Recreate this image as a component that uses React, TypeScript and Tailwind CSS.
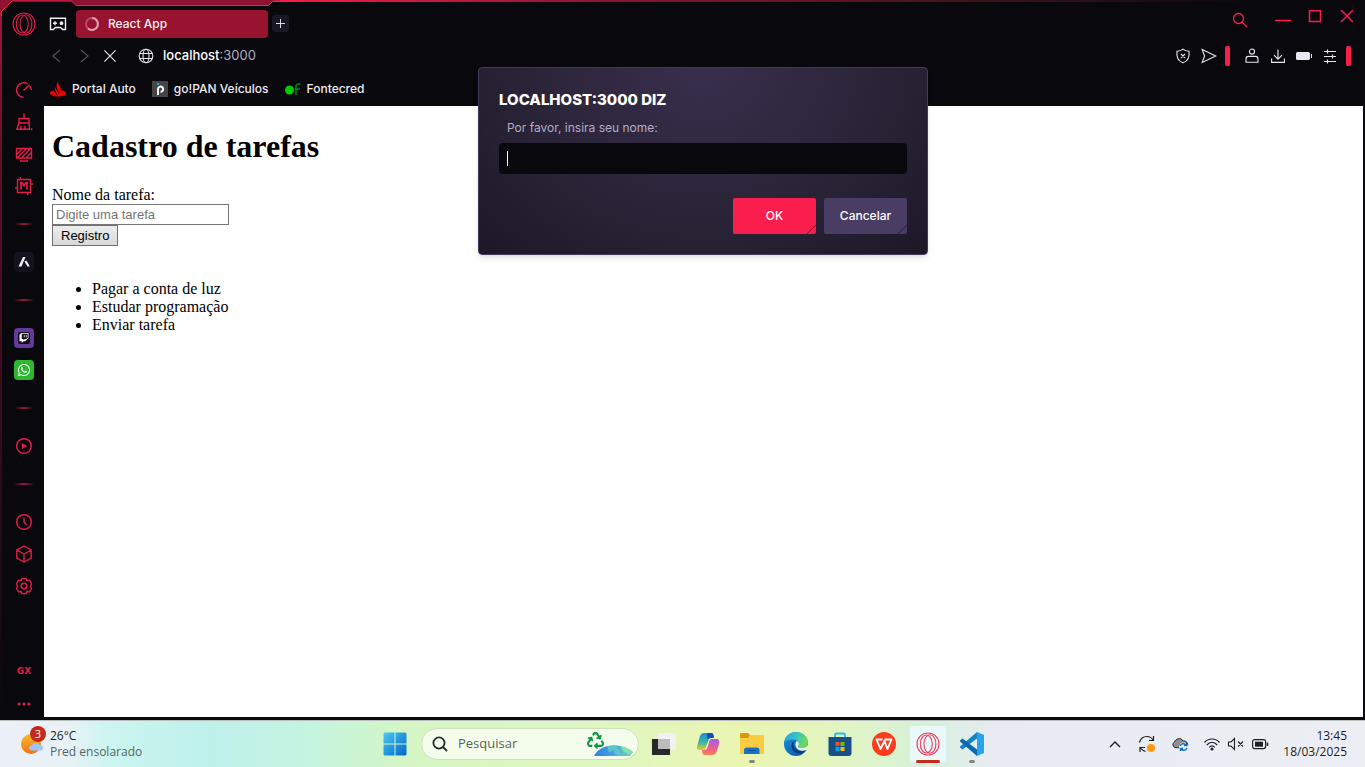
import type { ReactNode } from "react";
import { FaRecycle, FaTwitch, FaWhatsapp } from "react-icons/fa";

type IconProps = { className?: string };

function OperaLogo({ className }: IconProps) {
  return (
    <svg viewBox="0 0 24 24" className={className} fill="none" stroke="currentColor" strokeWidth="1.1">
      <circle cx="12" cy="12" r="11" />
      <ellipse cx="10.3" cy="12" rx="6" ry="9" />
      <ellipse cx="13.900" cy="12" rx="6" ry="9.200" />
    </svg>
  );
}

function ControllerIcon() {
  return (
    <svg viewBox="0 0 18 14" className="h-3.5 w-[18px]" fill="none" stroke="#f2f0f7" strokeWidth="1.4">
      <path d="M1.500 1.200H16.500V12.500H13.800L11.500 10.500H6.500L4.200 12.500H1.500Z" />
      <path d="M4 6.200H8M6 4.200V8.200" />
      <circle cx="12.500" cy="6.200" r="1.200" fill="#f2f0f7" />
    </svg>
  );
}

function Line({ d, children, className = "size-5" }: { d?: string; children?: ReactNode; className?: string }) {
  return (
    <svg viewBox="0 0 20 20" className={className} fill="none" stroke="currentColor" strokeWidth="1.4">
      {d && <path d={d} />}
      {children}
    </svg>
  );
}

function SideButton({ label, children }: { label: string; children: ReactNode }) {
  return (
    <button aria-label={label} className="flex h-8 w-11 items-center justify-center pl-1">
      {children}
    </button>
  );
}

function SideDivider() {
  return (
    <div className="flex h-11 items-center pl-3.5">
      <div className="h-0.5 w-5 bg-linear-to-r from-transparent via-[#a3173a] to-transparent" />
    </div>
  );
}

function Sidebar() {
  return (
    <nav aria-label="Barra lateral" className="flex w-11 shrink-0 flex-col text-[#e41c49]">
      <div className="flex h-[74px] items-start justify-center pt-3 pl-1">
        <button aria-label="Menu Opera">
          <OperaLogo className="size-6 text-[#e41c49]" />
        </button>
      </div>
      <SideButton label="GX Control">
        <Line d="M14 4A7.300 7.300 0 1 0 9.500 17.300M17.300 10A7.300 7.300 0 0 0 16 6.200M9.500 10.500L15.500 4.800" />
      </SideButton>
      <SideButton label="GX Cleaner">
        <Line d="M10 1.500V6.500M5 6.500H15V11H5ZM5 11L2.800 17.300H15.500L15 11M7 14V17.300M11 14V17.300M17 17.300H18.500" />
      </SideButton>
      <SideButton label="GX Ambiente">
        <Line d="M2.500 4.500H17.500V14H2.500ZM6 17H14M3 10L8 5M3 14L12 5M8 13.500L16 5M12 14L17 9" />
      </SideButton>
      <SideButton label="GX Mods">
        <Line d="M3.500 3.500H16.500V16.500H3.500ZM6.500 1V3.500M13.500 16.500V19M16.500 8H19M1 12H3.500">
          <path d="M7 13.500V6.500H8L10 9.500L12 6.500H13V13.500" strokeWidth="1.700" />
        </Line>
      </SideButton>
      <SideDivider />
      <SideButton label="Aria">
        <span className="flex size-5 items-center justify-center rounded-sm bg-[#14131c]">
          <svg viewBox="0 0 14 14" className="size-3.5" fill="#f4f2f8">
            <path d="M6 2H8.500L4.500 11.500H1.500Z" />
            <path d="M7.500 6.500L9.500 5.500L12.800 11.500H10.500Z" />
          </svg>
        </span>
      </SideButton>
      <SideDivider />
      <SideButton label="Twitch">
        <span className="flex size-5 items-center justify-center rounded-sm bg-[#613a9c]">
          <span className="flex size-3 items-center justify-center rounded-[2px] bg-[#100b18]">
            <FaTwitch className="size-2.5 text-white" />
          </span>
        </span>
      </SideButton>
      <SideButton label="WhatsApp">
        <span className="flex size-5 items-center justify-center rounded-sm bg-[#2db82f]">
          <FaWhatsapp className="size-3.5 text-white" />
        </span>
      </SideButton>
      <SideDivider />
      <SideButton label="Player">
        <Line>
          <circle cx="10" cy="10" r="7.300" strokeWidth="1.500" />
          <path d="M8 7L13 10L8 13Z" fill="currentColor" stroke="none" />
        </Line>
      </SideButton>
      <SideDivider />
      <SideButton label="Histórico">
        <Line d="M10 5.500V10L12.500 13">
          <circle cx="10" cy="10" r="7.300" strokeWidth="1.500" />
        </Line>
      </SideButton>
      <SideButton label="Extensões">
        <Line d="M10 2L17.200 6V14L10 18L2.800 14V6ZM2.800 6L10 10L17.200 6M10 10V18" />
      </SideButton>
      <SideButton label="Configurações">
        <Line d="M8 2.500H12L13 4.500L15.500 4.300L17.500 7.500L16.500 10L17.500 12.500L15.500 15.700L13 15.500L12 17.500H8L7 15.500L4.500 15.700L2.500 12.500L3.500 10L2.500 7.500L4.500 4.300L7 4.500Z">
          <circle cx="10" cy="10" r="2.800" strokeWidth="1.500" />
        </Line>
      </SideButton>
      <div className="grow" />
      <SideButton label="Painel GX">
        <span className="font-['DejaVu_Sans',sans-serif] text-[9px] font-bold">GX</span>
      </SideButton>
      <SideButton label="Mais">
        <svg viewBox="0 0 14 4" className="h-1 w-3.5" fill="currentColor">
          <circle cx="2" cy="2" r="1.500" />
          <circle cx="7" cy="2" r="1.500" />
          <circle cx="12" cy="2" r="1.500" />
        </svg>
      </SideButton>
    </nav>
  );
}

function TabBar() {
  return (
    <div className="flex h-[38px] items-end">
      <button aria-label="GX Corner" className="mb-[7px] ml-[5px]">
        <ControllerIcon />
      </button>
      <div className="ml-[9px] flex h-7 w-48 items-center rounded-[4px] bg-[#98132f] pl-2">
        <svg viewBox="0 0 16 16" className="size-4" fill="none" strokeWidth="2">
          <circle cx="8" cy="8" r="6" stroke="#b84c66" />
          <path d="M8 2A6 6 0 1 1 4 12.500" stroke="#dda0b0" />
        </svg>
        <span className="ml-2 text-xs font-medium text-[#fbeff2]">React App</span>
      </div>
      <button aria-label="Nova aba" className="mb-1.5 ml-1 flex size-[17px] items-center justify-center rounded-[3px] bg-[#1a1825]">
        <svg viewBox="0 0 9 9" className="size-[9px]" stroke="#dcd8e8">
          <path d="M4.500 0V9M0 4.500H9" />
        </svg>
      </button>
      <div className="mb-3 ml-auto flex h-4 items-center gap-4 pr-2.5 text-[#fa1e4e]">
        <button aria-label="Pesquisar abas" className="mr-[11px] pt-1">
          <svg viewBox="0 0 16 16" className="size-4" fill="none" stroke="currentColor" strokeWidth="1.300">
            <circle cx="6.500" cy="6.500" r="5" />
            <path d="M10 10L15 15" />
          </svg>
        </button>
        <button aria-label="Minimizar">
          <svg viewBox="0 0 16 16" className="size-4" stroke="currentColor" strokeWidth="1.500">
            <path d="M0 10.500H16" />
          </svg>
        </button>
        <button aria-label="Maximizar">
          <svg viewBox="0 0 16 16" className="size-4" fill="none" stroke="currentColor" strokeWidth="1.500">
            <path d="M2.500 0.800H13.500V11.500H2.500Z" />
          </svg>
        </button>
        <button aria-label="Fechar">
          <svg viewBox="0 0 16 16" className="size-4" stroke="currentColor" strokeWidth="1.500">
            <path d="M2 0L14 12M14 0L2 12" />
          </svg>
        </button>
      </div>
    </div>
  );
}

function AddressBar() {
  return (
    <div className="flex h-9 items-center text-[#e9e6f0]">
      <button aria-label="Voltar" className="ml-1 text-[#56535e]">
        <Line d="M15 2.500L6 10L15 17.500" className="size-4" />
      </button>
      <button aria-label="Avançar" className="ml-3 text-[#56535e]">
        <Line d="M6 2.500L15 10L6 17.500" className="size-4" />
      </button>
      <button aria-label="Parar" className="ml-2.5">
        <Line d="M3 3L17 17M17 3L3 17" className="size-4" />
      </button>
      <svg viewBox="0 0 16 16" className="ml-5 size-4" fill="none" stroke="currentColor" strokeWidth="1.100">
        <circle cx="8" cy="8" r="6.800" />
        <ellipse cx="8" cy="8" rx="3" ry="6.800" />
        <path d="M1.800 5.500H14.200M1.800 10.500H14.200" />
      </svg>
      <div className="ml-[9px] text-[13px] text-white">
        <span className="font-medium">localhost</span>
        <span className="text-[#b3acc6]">:3000</span>
      </div>
      <div className="ml-auto flex items-center">
        <button aria-label="Proteção">
          <Line d="M10 1.500C12 3.500 15 4 17.500 4C18.500 11 16 16.500 10 18.500C4 16.500 1.500 11 2.500 4C5 4 8 3.500 10 1.500ZM7.500 7.500L12.500 12.500M12.500 7.500L7.500 12.500" className="size-4" />
        </button>
        <button aria-label="My Flow" className="ml-2.5">
          <Line d="M1.500 2L18.500 10L1.500 18L4.500 10Z" className="size-4" />
        </button>
        <span className="ml-2 h-5 w-[5px] rounded-[2px] bg-[#fa1e4e]" />
        <button aria-label="Perfil" className="ml-3.5">
          <Line className="size-4">
            <circle cx="10" cy="4.500" r="3.200" />
            <path d="M2.500 17.800V14C2.500 11.500 4 10.500 5.500 10.500H14.500C16 10.500 17.500 11.500 17.500 14V17.800Z" />
          </Line>
        </button>
        <button aria-label="Downloads" className="ml-2.5">
          <Line d="M10 2V14M5 9L10 14L15 9M2 13V18H18V13" className="size-4" />
        </button>
        <button aria-label="Economia de bateria" className="ml-2.5">
          <svg viewBox="0 0 16 16" className="size-4" fill="currentColor">
            <rect x="0" y="4" width="14" height="8" rx="1.500" />
            <rect x="15" y="6" width="1" height="4" />
          </svg>
        </button>
        <button aria-label="Configuração fácil" className="ml-2.5">
          <svg viewBox="0 0 16 16" className="size-4" fill="none" stroke="currentColor">
            <path d="M2 3.500H14M2 8.500H14M2 13.500H14" strokeWidth="1.200" />
            <path d="M5.500 1.500V5.500M10.500 6.500V10.500M5.500 11.500V15.500" strokeWidth="1.200" />
          </svg>
        </button>
        <span className="mr-3.5 ml-2 h-5 w-[5px] rounded-[2px] bg-[#fa1e4e]" />
      </div>
    </div>
  );
}

function Bookmarks() {
  return (
    <div className="flex h-8 items-center gap-4 pb-0.5 pl-1.5 text-xs font-medium text-[#f0edf5]">
      <a href="#portal-auto" className="flex items-center gap-1.5">
        <svg viewBox="0 0 16 16" className="size-4" fill="#ee0000">
          <path d="M8.300 .3C7.700 2 8.400 3.100 9.300 4.600C10.500 6.600 11.100 7.700 10.800 9.300C14 9.600 16 10.600 16 12C16 14 12.500 15.600 8 15.600S0 14 0 12C0 10.500 1.800 9.700 4 9.200C4 10.300 4.500 11 5.300 12.200C6 13.200 6.500 13.700 6.500 14.500C7 13.200 6.600 12.200 5.900 11C4.800 9 4.500 8 5.300 5.500C5.400 6.800 5.900 7.600 6.700 9C7.600 10.600 8.600 11.700 8.500 13.200C9.300 11.600 8.700 10.400 7.900 9C6.700 7 6 5 6.800 3C7.100 1.700 7.700 1 8.300 .3Z" />
        </svg>
        Portal Auto
      </a>
      <a href="#gopan" className="flex items-center gap-1.5">
        <svg viewBox="0 0 16 16" className="size-4">
          <rect width="16" height="16" fill="#454545" />
          <path d="M6 14V8.500A2.600 2.600 0 1 1 8.500 10.800" fill="none" stroke="#fff" strokeWidth="2" />
          <rect x="5" y="2" width="2" height="2" fill="#16a8e8" />
        </svg>
        go!PAN Veículos
      </a>
      <a href="#fontecred" className="flex items-center gap-1.5">
        <svg viewBox="0 0 16 16" className="size-4">
          <circle cx="4.500" cy="9" r="4.500" fill="#00cc00" />
          <path d="M11 14V5C11 3.500 12 2.800 15.500 3M10 8H15" fill="none" stroke="#008c12" strokeWidth="1.500" />
        </svg>
        Fontecred
      </a>
    </div>
  );
}

function TaskPage() {
  return (
    <main className="mr-0.5 mb-[3px] grow bg-white px-2 pt-[21px] font-['Liberation_Serif',serif] text-base leading-[18px] text-black">
      <h1 className="mb-[21px] text-[32px] leading-[38px] font-bold">Cadastro de tarefas</h1>
      <form>
        <label htmlFor="task" className="block">
          Nome da tarefa:
        </label>
        <input
          id="task"
          type="text"
          placeholder="Digite uma tarefa"
          className="block h-[21px] w-[177px] border border-[#767676] bg-white px-[3px] font-['Liberation_Sans',sans-serif] text-[13px] placeholder:text-[#757575]"
        />
        <button
          type="button"
          className="block h-[21px] border border-[#707070] bg-linear-to-b from-[#ededed] to-[#d9d9d9] px-2 font-['Liberation_Sans',sans-serif] text-[13px] leading-[18px]"
        >
          Registro
        </button>
      </form>
      <ul className="mt-[34px] list-disc pl-10">
        <li>Pagar a conta de luz</li>
        <li>Estudar programação</li>
        <li>Enviar tarefa</li>
      </ul>
    </main>
  );
}

function Notch() {
  return (
    <svg viewBox="0 0 12 12" className="absolute right-0 bottom-0 size-2.5" stroke="#00000080" strokeWidth="1.200">
      <path d="M1 12L12 1" />
    </svg>
  );
}

function PromptDialog() {
  return (
    <div className="absolute inset-x-0 top-[67px] mr-[3px] flex justify-center">
      <div
        role="dialog"
        aria-labelledby="prompt-title"
        className="w-[450px] rounded-[4px] border border-[#443a5e] bg-[radial-gradient(ellipse_at_50%_0%,#392f4d_0%,#2a2438_55%,#1c1826_100%)] px-5 pt-6 pb-5 shadow-md"
      >
        <h2 id="prompt-title" className="text-[15px] leading-4 font-extrabold text-white">
          LOCALHOST:3000 DIZ
        </h2>
        <label htmlFor="prompt-name" className="mt-3 block pl-2 text-xs leading-4 text-[#b3acc8]">
          Por favor, insira seu nome:
        </label>
        <div className="mt-[7px] flex h-[31px] items-center rounded-[4px] bg-[#09080d] pl-2">
          <span className="h-[15px] w-px bg-white" />
          <input id="prompt-name" type="text" className="grow bg-transparent text-xs text-white outline-none" />
        </div>
        <div className="mt-6 flex justify-end gap-2 text-xs font-medium text-white">
          <button className="relative h-9 w-[83px] rounded-[2px] bg-[#fa1e4e]">
            OK
            <Notch />
          </button>
          <button className="relative h-9 w-[83px] rounded-[2px] bg-[#4a3d63]">
            Cancelar
            <Notch />
          </button>
        </div>
      </div>
    </div>
  );
}

function WindowFrame() {
  return (
    <div className="pointer-events-none absolute inset-0">
      <div className="absolute inset-y-0 left-0 w-0.5 bg-linear-to-b from-[#a3173a] via-[#5c0f24] via-25% to-transparent" />
      <div className="absolute top-0 right-0 left-[272px] h-0.5 bg-linear-to-r from-[#fa1e4e] via-[#8d1431] via-30% to-[#09080d] to-90%" />
      <svg viewBox="0 0 280 16" className="absolute top-0 left-0 h-4 w-[280px]">
        <path d="M0 0H280V1H273L268.500 5.500H76L71.500 1H12L1 12V16H0Z" fill="#8d1431" />
        <path d="M280 1H273L268.500 5.500H76L71.500 1H12L1 12V16" fill="none" stroke="#fa1e4e" />
      </svg>
    </div>
  );
}

function TaskIcon({ label, children, mark }: { label: string; children: ReactNode; mark?: "open" | "active" }) {
  return (
    <button
      aria-label={label}
      className={
        mark === "active"
          ? "relative mx-[3px] flex h-[38px] w-[38px] items-center justify-center rounded-[4px] border border-[#d7eeee] bg-[#e9f9f8]"
          : "relative flex h-[38px] w-11 items-center justify-center"
      }
    >
      {children}
      {mark === "open" && <span className="absolute bottom-0 h-[3px] w-1.5 rounded-full bg-[#85857f]" />}
      {mark === "active" && <span className="absolute -bottom-px h-[3px] w-6 rounded-full bg-[#c42b1c]" />}
    </button>
  );
}

function TaskbarApps() {
  return (
    <div className="flex items-center">
      <TaskIcon label="Iniciar">
        <svg viewBox="0 0 24 24" className="size-6">
          <defs>
            <linearGradient id="win" x1="0" y1="0" x2="1" y2="1" gradientUnits="objectBoundingBox">
              <stop offset="0" stopColor="#4cc8f4" />
              <stop offset="1" stopColor="#0067c8" />
            </linearGradient>
          </defs>
          <path d="M1.500 .5H11.500V11.500H.5V1.500ZM12.500 .5H22.500L23.500 1.500V11.500H12.500ZM.5 12.500H11.500V23.500H1.500L.5 22.500ZM12.500 12.500H23.500V22.500L22.500 23.500H12.500Z" fill="url(#win)" />
        </svg>
      </TaskIcon>
      <div className="mr-[3px] ml-1 flex h-8 w-[218px] items-center rounded-full border border-[#cfe0bd] bg-[#f4fdec] pr-1 pl-2.5">
        <svg viewBox="0 0 16 16" className="size-4 shrink-0" fill="none" stroke="#26282b" strokeWidth="1.800">
          <circle cx="7" cy="7" r="5.600" />
          <path d="M11 11L15 15" />
        </svg>
        <input
          type="text"
          aria-label="Pesquisar"
          placeholder="Pesquisar"
          className="ml-2.5 w-28 bg-transparent text-[13px] outline-none placeholder:text-[#5b6157]"
        />
        <svg viewBox="0 0 48 28" className="ml-auto h-7 w-12 shrink-0">
          <defs>
            <linearGradient id="earth">
              <stop offset="0" stopColor="#2a80df" />
              <stop offset=".5" stopColor="#49a3e4" />
              <stop offset="1" stopColor="#79dfa5" />
            </linearGradient>
            <clipPath id="globe">
              <path d="M8 26C12 18 20 15.500 28 15.500S42 18 47 22L44 26Z" />
            </clipPath>
          </defs>
          <g clipPath="url(#globe)">
            <path d="M8 15H48V27H8Z" fill="url(#earth)" />
            <path d="M20 16C25 18 19 20 24 22L28 20C27 24 32 26 36 26L30 15Z" fill="#5cc5cc" />
            <path d="M34 15L37 21L42 24L48 22V15Z" fill="#84e2ad" />
          </g>
          <FaRecycle x="1" y="2" width="17" height="17" size={17} color="#119447" />
        </svg>
      </div>
      <TaskIcon label="Visão de tarefas">
        <svg viewBox="0 0 24 24" className="size-6">
          <path d="M0 7H18V23H0Z" fill="#292929" />
          <path d="M6 1H24V17H6Z" fill="#f2f2f2" />
          <path d="M6 7H18V17H6Z" fill="#bcbcbc" />
        </svg>
      </TaskIcon>
      <TaskIcon label="Copilot">
        <svg viewBox="0 0 24 24" className="size-6">
          <defs>
            <linearGradient id="cpa" x1="0" y1="0" x2="0" y2="1">
              <stop offset="0" stopColor="#1b8de0" />
              <stop offset=".55" stopColor="#3ab6a2" />
              <stop offset="1" stopColor="#f1c52b" />
            </linearGradient>
            <linearGradient id="cpb" x1="0" y1="0" x2="0" y2="1">
              <stop offset="0" stopColor="#a55be8" />
              <stop offset=".6" stopColor="#ed5a91" />
              <stop offset="1" stopColor="#f9854b" />
            </linearGradient>
          </defs>
          <path d="M8 1H15C17 1 17.500 2.500 18 5L13 7L10 15C9 18 8 18 5 18H3C0 18 1 14 2 11L4 4C5 2 6 1 8 1Z" fill="url(#cpa)" />
          <path d="M11 1H15C17 1 17.500 2.500 18 6H14C12 6 12 7 11.500 8Z" fill="#1848bc" />
          <path d="M16 7H20C23 7 24 9 23 12L20.500 20C20 22 18 23 16 23H9C7 23 6.500 22 6 18H8C10 18 11 17 12 14L13.500 9C14 7.500 15 7 16 7Z" fill="url(#cpb)" />
        </svg>
      </TaskIcon>
      <TaskIcon label="Explorador de Arquivos" mark="open">
        <svg viewBox="0 0 24 24" className="size-6">
          <path d="M0 2Q0 1 1 1H8L10 3V7H0Z" fill="#d89a08" />
          <path d="M0 6H8L10 3H23Q24 3 24 4V21Q24 22 23 22H1Q0 22 0 21Z" fill="#fbcb42" />
          <path d="M4 22V18Q4 15.500 6.500 15.500H17Q19.500 15.500 19.500 18V22Z" fill="#1674c5" />
          <path d="M7.500 18.500H16" stroke="#0c4c8f" />
        </svg>
      </TaskIcon>
      <TaskIcon label="Microsoft Edge">
        <svg viewBox="0 0 24 24" className="size-6">
          <defs>
            <linearGradient id="edge" x1="0" y1="0" x2="1" y2=".35">
              <stop offset="0" stopColor="#1e9de2" />
              <stop offset=".5" stopColor="#35c1cf" />
              <stop offset="1" stopColor="#6adb55" />
            </linearGradient>
            <linearGradient id="edgeb" x1="0" y1="0" x2="1" y2="1">
              <stop offset="0" stopColor="#1793df" />
              <stop offset="1" stopColor="#104fa3" />
            </linearGradient>
          </defs>
          <circle cx="12" cy="12" r="12" fill="url(#edgeb)" />
          <path d="M0 11C1 4 6 0 12 0C19 0 24 5 24 10.500C24 14 21 16 18 16C15.500 16 14 15.300 14 14.500C14 14 15 13.500 15 12C15 9.500 12.500 7.500 9 7.500C5 7.500 1 9 0 11Z" fill="url(#edge)" />
          <path d="M9 10C6.500 12.500 7 19 12.500 21C16.500 22.500 20 20.500 22.500 18C18 20 11.500 19 10 14.500C9.400 12.800 9.500 11 10.500 9.500Z" fill="#0c3d7c" />
          <path d="M14.500 13.500C13 15 15 16 18 16C21 16 23 14.500 23.800 12.500L24 16L22.500 18C18 20 12 18 11.500 13C11.300 11 12 9.500 13 9C15 10 15.500 12 14.500 13.500Z" fill="#e6f4df" />
        </svg>
      </TaskIcon>
      <TaskIcon label="Microsoft Store">
        <svg viewBox="0 0 24 24" className="size-6">
          <path d="M7 7V3Q7 1.500 8.500 1.500H15.500Q17 1.500 17 3V7" fill="none" stroke="#2db7ef" strokeWidth="1.800" />
          <path d="M.5 5H23.500V21Q23.500 24 20.500 24H3.500Q.5 24 .5 21Z" fill="#174f86" />
          <path d="M7.500 10H11.500V14H7.500Z" fill="#f25022" />
          <path d="M12.500 10H16.500V14H12.500Z" fill="#7fba00" />
          <path d="M7.500 15H11.500V19H7.500Z" fill="#00a4ef" />
          <path d="M12.500 15H16.500V19H12.500Z" fill="#ffb900" />
        </svg>
      </TaskIcon>
      <TaskIcon label="WPS Office">
        <svg viewBox="0 0 24 24" className="size-6">
          <circle cx="12" cy="12" r="12" fill="#fb3c1d" />
          <path d="M10.500 7.500H4.500L8.500 17L12.500 9L15.500 17L19.500 7.500H12.500" fill="none" stroke="#fff" strokeWidth="1.900" strokeLinejoin="round" />
        </svg>
      </TaskIcon>
      <TaskIcon label="Opera GX" mark="active">
        <OperaLogo className="size-6 text-[#f13a60]" />
      </TaskIcon>
      <TaskIcon label="Visual Studio Code" mark="open">
        <svg viewBox="0 0 24 24" className="size-6">
          <path d="M17 0V6.500L2.500 17.500L0 15.500V14.500Z" fill="#1284ca" />
          <path d="M0 8.500L2.500 6.500L17 17.500V24L0 9.500Z" fill="#0b6bb0" />
          <path d="M17 0L24 3V21L17 24Z" fill="#28a2e8" />
        </svg>
      </TaskIcon>
    </div>
  );
}

function SystemTray() {
  return (
    <div className="flex flex-1 items-center justify-end pr-[18px] text-[#1d1f23]">
      <button aria-label="Mostrar ícones ocultos">
        <svg viewBox="0 0 12 8" className="h-2 w-3" fill="none" stroke="currentColor" strokeWidth="1.400">
          <path d="M1 7L6 2L11 7" />
        </svg>
      </button>
      <svg viewBox="0 0 20 20" className="ml-4 size-5" fill="none" stroke="currentColor" strokeWidth="1.200">
        <path d="M2.500 8.500C3.500 4.500 6.500 2.500 10 2.500C12.500 2.500 14.500 3.500 16 6M16.500 2V6.500H12M3 18V13.500H8M3.500 14C5 16 6.500 17 8.500 17.300" />
        <circle cx="14" cy="14" r="4" fill="#ff9a0a" stroke="none" />
      </svg>
      <svg viewBox="0 0 18 16" className="ml-3.5 h-4 w-[18px]">
        <path d="M4 11.500A3 3 0 0 1 3.500 6C4.500 2.500 10 1 12 5C15 4.500 17.500 7 16.500 10L13 12Z" fill="#8f9092" stroke="#292a2c" />
        <circle cx="12.500" cy="11" r="4.500" fill="#eef3fa" />
        <path d="M9 10A3.500 3.500 0 0 1 15 9M15.500 7V9.500H13M16 12A3.500 3.500 0 0 1 10 13M9.500 15V12.500H12" fill="none" stroke="#0a6fcb" strokeWidth="1.400" />
      </svg>
      <svg viewBox="0 0 18 16" className="ml-3.5 h-4 w-[18px]" fill="none" stroke="currentColor" strokeWidth="1.200">
        <path d="M1.500 6.500C5.500 1.800 12.500 1.800 16.500 6.500M3.800 9C7 5.300 11 5.300 14.200 9M6.200 11.300C8 9.300 10 9.300 11.800 11.300" />
        <circle cx="9" cy="13" r="1" fill="currentColor" />
      </svg>
      <svg viewBox="0 0 18 16" className="ml-1.5 h-4 w-[18px]" fill="none" stroke="currentColor" strokeWidth="1.100">
        <path d="M1.500 6H4L7.500 2.500V13.500L4 10H1.500ZM11 5.500L16 10.500M16 5.500L11 10.500" />
      </svg>
      <svg viewBox="0 0 18 16" className="ml-1.5 h-4 w-[18px]" fill="none" stroke="currentColor" strokeWidth="1.200">
        <rect x="1.600" y="3.600" width="13" height="9" rx="2" />
        <path d="M4 5.700H12V10.700H4Z" fill="currentColor" stroke="none" />
        <path d="M16.500 6.500V10" strokeWidth="1.500" />
      </svg>
      <div className="ml-3.5 text-right text-xs leading-4">
        <div>13:45</div>
        <div>18/03/2025</div>
      </div>
    </div>
  );
}

function Taskbar() {
  return (
    <footer className="flex h-[47px] shrink-0 items-center border-t border-[#b9bfbf] bg-[linear-gradient(90deg,#edf0f8_0%,#e8f2f6_5%,#ccf5ef_8%,#bff1ed_15%,#c5f4df_23%,#d5f6c4_30%,#dff7c0_45%,#ebf5b2_54%,#e3f5c0_61%,#d5f1dc_68%,#e9ebf3_73%,#edeef4_100%)] font-['Open_Sans',sans-serif]">
      <div className="flex flex-1 items-center pl-5">
        <div className="relative">
          <svg viewBox="0 0 26 28" className="h-7 w-[26px]">
            <defs>
              <linearGradient id="sun" x1="0" y1="0" x2="0" y2="1">
                <stop offset="0" stopColor="#f7bd28" />
                <stop offset="1" stopColor="#f1711b" />
              </linearGradient>
            </defs>
            <circle cx="11" cy="14" r="10" fill="url(#sun)" />
            <path d="M12 20.500C8 20.500 8 15.500 12 15.500C13 12 18 12 19.500 15C23.500 14.500 24.500 20.500 20.500 20.500Z" fill="#9dc4f8" />
          </svg>
          <span className="absolute -top-1 left-2.5 flex size-4 items-center justify-center rounded-full bg-[#c42b1c] text-[11px] text-white">
            3
          </span>
        </div>
        <div className="ml-1 text-xs leading-4">
          <div className="text-[#1d2425]">26°C</div>
          <div className="text-[#536566]">Pred ensolarado</div>
        </div>
      </div>
      <TaskbarApps />
      <SystemTray />
    </footer>
  );
}

export default function App() {
  return (
    <div className="flex min-h-screen flex-col bg-[#09080d] font-[Inter,sans-serif]">
      <div className="relative flex grow">
        <Sidebar />
        <div className="relative flex grow flex-col">
          <TabBar />
          <AddressBar />
          <Bookmarks />
          <TaskPage />
          <PromptDialog />
        </div>
        <WindowFrame />
      </div>
      <Taskbar />
    </div>
  );
}
